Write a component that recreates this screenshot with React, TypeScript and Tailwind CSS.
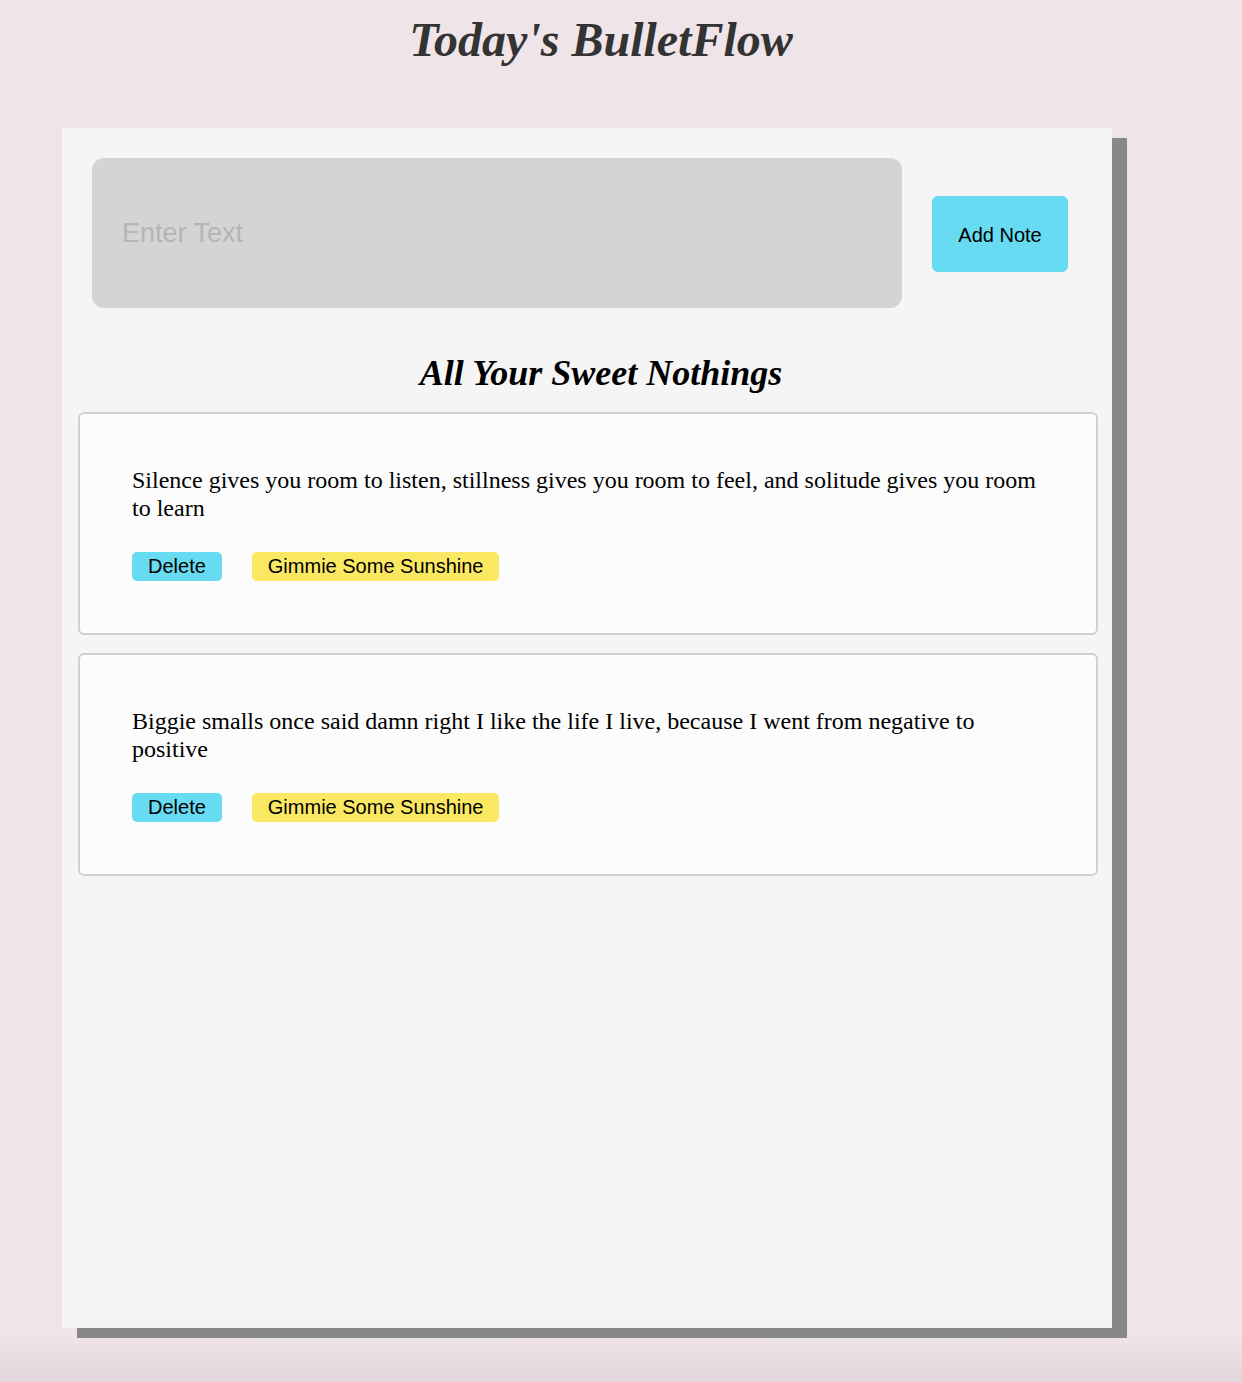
import { useState } from 'react'

type Note = { id: number; text: string }

const initialNotes: Note[] = [
  {
    id: 1,
    text: 'Silence gives you room to listen, stillness gives you room to feel, and solitude gives you room to learn',
  },
  {
    id: 2,
    text: 'Biggie smalls once said damn right I like the life I live, because I went from negative to positive',
  },
]

function NoteCard({ note, onDelete }: { note: Note; onDelete: (id: number) => void }) {
  return (
    <div className="mx-[16px] w-[1020px] rounded-[6px] border-2 border-[#d0d0d0] bg-[#fcfcfc] p-[52px]">
      <p className="font-['Liberation_Serif',serif] text-[24px] leading-[28px] text-black">{note.text}</p>
      <div className="mt-[30px] flex items-center gap-[30px]">
        <button
          onClick={() => onDelete(note.id)}
          className="h-[29px] rounded-[5px] bg-[#66dbf1] px-[16px] font-['Liberation_Sans',sans-serif] text-[20px] leading-[29px] text-black"
        >
          Delete
        </button>
        <button className="h-[29px] rounded-[5px] bg-[#fbe862] px-[16px] font-['Liberation_Sans',sans-serif] text-[20px] leading-[29px] text-black">
          Gimmie Some Sunshine
        </button>
      </div>
    </div>
  )
}

export default function App() {
  const [notes, setNotes] = useState<Note[]>(initialNotes)
  const [draft, setDraft] = useState('')

  const addNote = () => {
    if (!draft.trim()) return
    setNotes((n) => [...n, { id: Date.now(), text: draft }])
    setDraft('')
  }

  return (
    <main className="relative min-h-screen bg-[#efe4e8] pb-[54px]">
      <h1 className="pr-[40px] pt-[12px] text-center font-['Liberation_Serif',serif] text-[48px] font-bold italic leading-[55px] text-[#333]">
        Today's BulletFlow
      </h1>

      <section className="ml-[62px] mt-[61px] flex h-[1200px] w-[1050px] flex-col bg-[#f5f5f5] shadow-[15px_10px_0_#888]">
        <div className="flex items-start gap-[30px] pl-[30px] pt-[30px]">
          <input
            value={draft}
            onChange={(e) => setDraft(e.target.value)}
            placeholder="Enter Text"
            className="h-[150px] w-[810px] rounded-[12px] bg-[#d4d4d4] px-[30px] font-['Liberation_Sans',sans-serif] text-[27px] text-[#333] outline-none placeholder:text-[#b5b5b5]"
          />
          <button
            onClick={addNote}
            className="mt-[38px] h-[76px] w-[136px] rounded-[6px] bg-[#66dbf1] pt-[2px] font-['Liberation_Sans',sans-serif] text-[20px] text-black"
          >
            Add Note
          </button>
        </div>

        <h2 className="mt-[45px] pl-[28px] text-center font-['Liberation_Serif',serif] text-[36px] font-bold italic leading-[41px] text-black">
          All Your Sweet Nothings
        </h2>

        <div className="mt-[18px] flex flex-col gap-[18px]">
          {notes.map((note) => (
            <NoteCard key={note.id} note={note} onDelete={(id) => setNotes((n) => n.filter((x) => x.id !== id))} />
          ))}
        </div>
      </section>

      <div className="pointer-events-none absolute bottom-0 left-0 h-[45px] w-full bg-gradient-to-b from-transparent to-[rgba(110,70,90,0.09)]" />
    </main>
  )
}
